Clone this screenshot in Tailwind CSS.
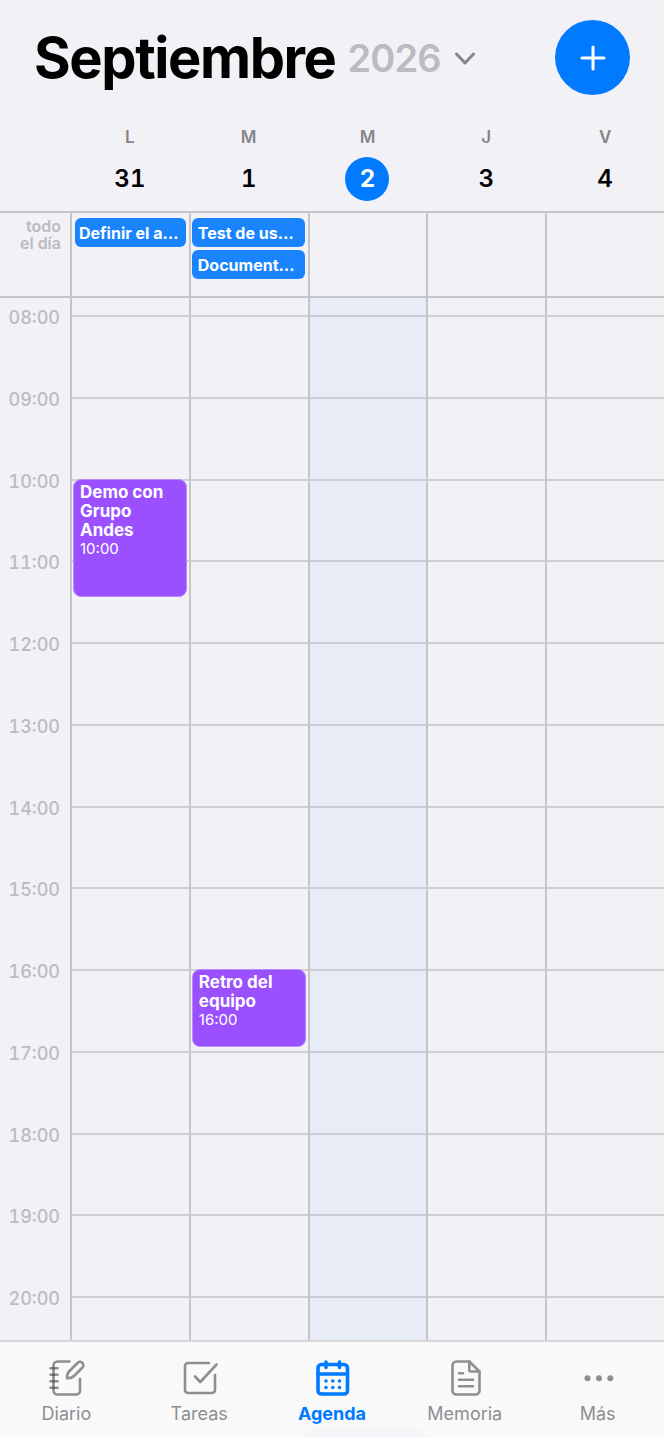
<!DOCTYPE html>
<html lang="es">
  <head>
    <meta charset="UTF-8" />
    <meta name="viewport" content="width=device-width, initial-scale=1.0" />
    <title>Agenda - Septiembre 2026</title>
    <script src="https://cdn.jsdelivr.net/npm/@tailwindcss/browser@4"></script>
  </head>
  <body
    class="flex min-h-screen flex-col bg-[#f2f1f6] font-['Inter',sans-serif] text-black"
  >
    <!-- Header -->
    <header class="flex h-[115px] items-center px-[34px]">
      <h1 class="flex flex-1 items-center gap-3">
        <span class="text-[56px] leading-none font-bold tracking-tight"
          >Septiembre</span
        >
        <span
          class="text-[38px] leading-none font-semibold tracking-tight text-[#bcbbc0]"
          >2026</span
        >
        <button type="button" aria-label="Elegir mes" class="p-0">
          <svg
            class="h-6 w-6 text-[#85858a]"
            fill="none"
            stroke="currentColor"
            stroke-width="3"
            stroke-linecap="round"
            stroke-linejoin="round"
            viewBox="0 0 24 24"
          >
            <path d="M3.5 8L12 17L20.5 8" />
          </svg>
        </button>
      </h1>
      <button
        type="button"
        aria-label="Nuevo evento"
        class="flex h-[75px] w-[75px] items-center justify-center rounded-full bg-[#007aff] text-white"
      >
        <svg
          class="h-7 w-7"
          fill="none"
          stroke="currentColor"
          stroke-width="3"
          stroke-linecap="round"
          viewBox="0 0 28 28"
        >
          <path d="M14 3V25M3 14H25" />
        </svg>
      </button>
    </header>

    <!-- Week days -->
    <div
      class="grid h-[98px] grid-cols-[70px_repeat(5,minmax(0,1fr))] border-b-2 border-[#c6c5ca] text-center tabular-nums"
    >
      <div></div>
      <div class="flex flex-col items-center gap-2 pt-[10px] pl-px">
        <span class="text-[17px] leading-6 font-semibold text-[#85858a]">L</span>
        <span class="h-11 w-11 text-2xl leading-11 font-semibold">31</span>
      </div>
      <div class="flex flex-col items-center gap-2 pt-[10px] pl-px">
        <span class="text-[17px] leading-6 font-semibold text-[#85858a]">M</span>
        <span class="h-11 w-11 text-2xl leading-11 font-semibold">1</span>
      </div>
      <div class="flex flex-col items-center gap-2 pt-[10px] pl-px">
        <span class="text-[17px] leading-6 font-semibold text-[#85858a]">M</span>
        <span
          class="h-11 w-11 rounded-full bg-[#007aff] text-2xl leading-11 font-bold text-white"
          >2</span
        >
      </div>
      <div class="flex flex-col items-center gap-2 pt-[10px] pl-px">
        <span class="text-[17px] leading-6 font-semibold text-[#85858a]">J</span>
        <span class="h-11 w-11 text-2xl leading-11 font-semibold">3</span>
      </div>
      <div class="flex flex-col items-center gap-2 pt-[10px] pl-px">
        <span class="text-[17px] leading-6 font-semibold text-[#85858a]">V</span>
        <span class="h-11 w-11 text-2xl leading-11 font-semibold">4</span>
      </div>
    </div>

    <!-- All day -->
    <div
      class="grid h-[85px] grid-cols-[70px_repeat(5,minmax(0,1fr))] border-b-2 border-[#c6c5ca]"
    >
      <div
        class="pt-[5px] pr-[9px] text-right text-base leading-[17px] font-semibold text-[#bcbbc0]"
      >
        todo<br />el día
      </div>
      <div class="flex flex-col gap-[3px] border-l-2 border-[#c6c5ca] px-[3px] pt-[5px]">
        <a
          href="#definir"
          class="block h-[29px] overflow-hidden rounded-md bg-[#1a84ff] px-1 text-base leading-[30px] font-bold whitespace-nowrap text-white"
          >Definir el a…</a
        >
      </div>
      <div class="flex flex-col gap-[3px] border-l-2 border-[#c6c5ca] pt-[5px] pr-[3px] pl-px">
        <a
          href="#test"
          class="block h-[29px] overflow-hidden rounded-md bg-[#1a84ff] px-[6px] text-base leading-[30px] font-bold whitespace-nowrap text-white"
          >Test de us…</a
        >
        <a
          href="#document"
          class="block h-[29px] overflow-hidden rounded-md bg-[#1a84ff] px-[6px] text-base leading-[30px] font-bold whitespace-nowrap text-white"
          >Document…</a
        >
      </div>
      <div class="border-l-2 border-[#c6c5ca]"></div>
      <div class="border-l-2 border-[#c6c5ca]"></div>
      <div class="border-l-2 border-[#c6c5ca]"></div>
    </div>

    <!-- Hours: one row per half hour from 08:00 to 20:00 -->
    <main
      id="hours"
      class="grid flex-1 grid-cols-[70px_repeat(5,minmax(0,1fr))] grid-rows-[17px_repeat(24,minmax(0,1fr))_44px]"
    >
      <div class="col-start-2 row-span-full row-start-1 border-l-2 border-[#c6c5ca]"></div>
      <div class="col-start-3 row-span-full row-start-1 border-l-2 border-[#c6c5ca]"></div>
      <div class="col-start-4 row-span-full row-start-1 border-l-2 border-[#c6c5ca] bg-[#e7ecf7]"></div>
      <div class="col-start-5 row-span-full row-start-1 border-l-2 border-[#c6c5ca]"></div>
      <div class="col-start-6 row-span-full row-start-1 border-l-2 border-[#c6c5ca]"></div>

      <a
        href="#demo"
        class="z-10 col-start-2 row-span-3 row-start-6 mr-[2px] mb-1 ml-[3px] rounded-lg border border-[#b98aff] bg-[#9a50ff] px-[6px] pt-[3px] text-white"
      >
        <strong class="block text-[17px] leading-[19px] font-bold"
          >Demo con Grupo Andes</strong
        >
        <time class="block text-[15px] leading-[18px]">10:00</time>
      </a>
      <a
        href="#retro"
        class="z-10 col-start-3 row-span-2 row-start-18 mr-[2px] mb-1 ml-[3px] rounded-lg border border-[#b98aff] bg-[#9a50ff] px-[6px] pt-[3px] text-white"
      >
        <strong class="block text-[17px] leading-[19px] font-bold"
          >Retro del equipo</strong
        >
        <time class="block text-[15px] leading-[18px]">16:00</time>
      </a>
    </main>

    <!-- Tab bar -->
    <nav
      class="relative grid h-[97px] grid-cols-5 border-t-2 border-[#d8d7dc] bg-[#f9f9f9] text-[#8e8e93]"
    >
      <a href="#diario" class="flex flex-col items-center gap-1 pt-4">
        <svg
          class="h-10 w-10"
          fill="none"
          stroke="currentColor"
          stroke-width="2.6"
          stroke-linecap="round"
          stroke-linejoin="round"
          viewBox="0 0 40 40"
        >
          <path d="M23.5 3.5H11.5a4 4 0 0 0-4 4V32.5a4 4 0 0 0 4 4H30a4 4 0 0 0 4-4V21" />
          <path d="M21 20.3C21 17 21.5 15 23 13.5L31.5 5a3.3 3.3 0 0 1 5 4.5L28 18C26.5 19.5 24.5 20.2 21 20.3Z" />
          <path d="M4.5 10.3H11.5M4.5 16.8H11.5M4.5 23.3H11.5M4.5 29.8H11.5" />
          <path
            stroke="#5f5f64"
            stroke-linecap="butt"
            d="M6.2 10.3H8.8M6.2 16.8H8.8M6.2 23.3H8.8M6.2 29.8H8.8"
          />
        </svg>
        <span class="text-lg leading-6">Diario</span>
      </a>
      <a href="#tareas" class="flex flex-col items-center gap-1 pt-4">
        <svg
          class="h-10 w-10"
          fill="none"
          stroke="currentColor"
          stroke-width="2.6"
          stroke-linecap="round"
          stroke-linejoin="round"
          viewBox="0 0 40 40"
        >
          <path d="M30 5H9a3 3 0 0 0-3 3V32a3 3 0 0 0 3 3H33a3 3 0 0 0 3-3V17" />
          <path d="M16 18.5L21.3 24L37.5 6.5" />
        </svg>
        <span class="text-lg leading-6">Tareas</span>
      </a>
      <a
        href="#agenda"
        aria-current="page"
        class="flex flex-col items-center gap-1 pt-4 text-[#007aff]"
      >
        <svg
          class="h-10 w-10"
          fill="none"
          stroke="currentColor"
          stroke-width="3.6"
          stroke-linecap="round"
          stroke-linejoin="round"
          viewBox="0 0 40 40"
        >
          <rect x="6" y="6.5" width="29.5" height="29.5" rx="3.5" />
          <path d="M6 16H35.5M14 4V9.5M27.5 4V9.5" />
          <path d="M14 23h.01M20.8 23h.01M27.5 23h.01M14 29.5h.01M20.8 29.5h.01M27.5 29.5h.01" />
        </svg>
        <span class="text-lg leading-6 font-bold">Agenda</span>
      </a>
      <a href="#memoria" class="flex flex-col items-center gap-1 pt-4">
        <svg
          class="h-10 w-10"
          fill="none"
          stroke="currentColor"
          stroke-width="2.6"
          stroke-linecap="round"
          stroke-linejoin="round"
          viewBox="0 0 40 40"
        >
          <path d="M24.3 3.5H11.5a4 4 0 0 0-4 4V32.5a4 4 0 0 0 4 4H30.5a4 4 0 0 0 4-4V13.5Z" />
          <path d="M24.3 3.5V12a1.5 1.5 0 0 0 1.5 1.5H34.5" />
          <path d="M14 15.3H18M14 21.8H28M14 28.3H28" />
        </svg>
        <span class="text-lg leading-6">Memoria</span>
      </a>
      <a href="#mas" class="flex flex-col items-center gap-1 pt-4">
        <svg class="h-10 w-10" fill="currentColor" viewBox="0 0 40 40">
          <circle cx="9.5" cy="20.3" r="3" />
          <circle cx="21" cy="20.3" r="3" />
          <circle cx="32.3" cy="20.3" r="3" />
        </svg>
        <span class="text-lg leading-6">Más</span>
      </a>
      <div
        class="absolute bottom-0 left-[46%] h-2 w-[18%] rounded-t-lg bg-[#f5f5f9]"
      ></div>
    </nav>

    <script>
      const hours = document.getElementById("hours");

      for (let h = 8; h <= 20; h++) {
        const row = 2 + (h - 8) * 2;

        const label = document.createElement("time");
        label.className =
          "col-start-1 -mt-[7px] h-5 pr-[10px] text-right text-lg leading-5 font-medium text-[#bcbbc0] tabular-nums";
        label.style.gridRowStart = row;
        label.textContent = String(h).padStart(2, "0") + ":00";

        const line = document.createElement("div");
        line.className =
          "col-start-2 col-end-7 h-0 border-t-2 border-[#c6c5ca]/80";
        line.style.gridRowStart = row;

        hours.append(label, line);
      }
    </script>
  </body>
</html>
